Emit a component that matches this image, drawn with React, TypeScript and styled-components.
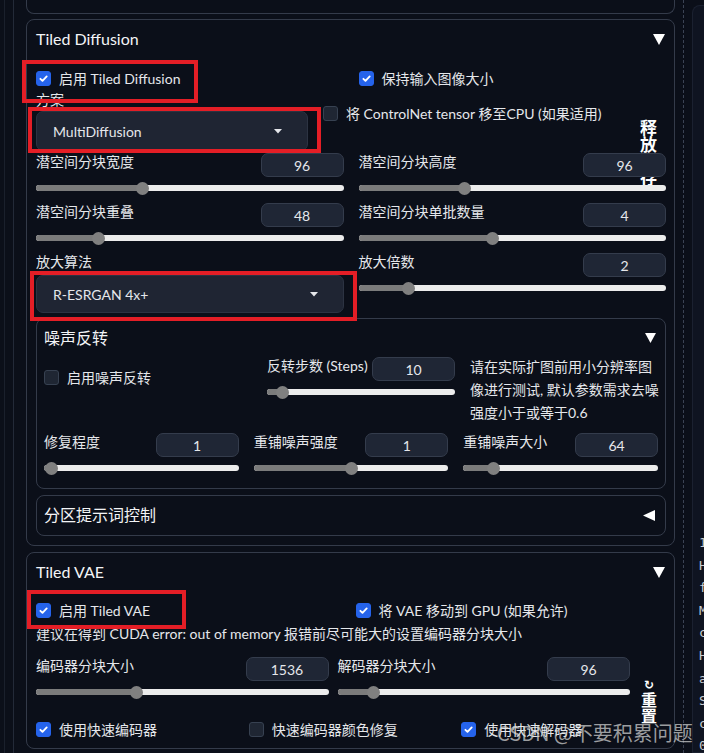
import React from 'react'
import styled, { createGlobalStyle } from 'styled-components'

const FONT = `Lato, "Noto Sans CJK SC", "Noto Sans", sans-serif`

const GlobalStyle = createGlobalStyle`
  * { box-sizing: border-box; }
  html, body { margin: 0; padding: 0; background: #0b0f19; }
  body { font-family: ${FONT}; color: #e5e7eb; font-size: 14px; }
`

const Page = styled.div`
  position: relative;
  width: 704px;
  height: 753px;
  overflow: hidden;
  display: flex;
  background: #0b0f19;
`

const Gutter = styled.div`
  display: flex;
  flex: none;
  margin-left: 4px;
  padding-left: 8px;
  border-left: 1px solid #1a202c;
`

const Column = styled.div`
  width: 671px;
  padding: 0 8px 0 12px;
  border-left: 1px solid #232a38;
  border-right: 1px dashed #3b4354;
  display: flex;
  flex-direction: column;
  & > * {
    flex: none;
  }
`

const SidePanel = styled.div`
  flex: 1;
  margin: 5px 0 0 8px;
  padding: 526px 0 0 6px;
  background: #0f1421;
  border: 1px solid #1b2130;
  border-right: none;
  border-radius: 8px 0 0 0;
  font-family: 'DejaVu Sans Mono', monospace;
  font-size: 13px;
  line-height: 22.6px;
  color: #c9cdd4;
  white-space: nowrap;
  overflow: hidden;
`

const PrevPanel = styled.div`
  height: 14px;
  margin-bottom: 5px;
  border: 1px solid #343b4a;
  border-top: none;
  border-radius: 0 0 8px 8px;
`

const Panel = styled.section<{ $mt?: number }>`
  position: relative;
  display: flex;
  flex-direction: column;
  margin-top: ${(p) => p.$mt ?? 0}px;
  padding: 8px 8px 9px 9px;
  border: 1px solid #343b4a;
  border-radius: 8px;
`

const SubPanel = styled.section<{ $mt: number; $pb: number }>`
  display: flex;
  flex-direction: column;
  margin-top: ${(p) => p.$mt}px;
  padding: 8px 7px ${(p) => p.$pb}px 7px;
  border: 1px solid #343b4a;
  border-radius: 8px;
`

const Header = styled.div<{ $mb?: number; $inset?: number }>`
  display: flex;
  align-items: center;
  justify-content: space-between;
  height: 22px;
  margin-bottom: ${(p) => p.$mb ?? 0}px;
  padding-right: ${(p) => p.$inset ?? 1}px;
  font-size: 16px;
  line-height: 22px;
  color: #f3f4f6;
`

const TwoCol = styled.div<{ $mt?: number }>`
  display: grid;
  grid-template-columns: 1fr 1fr;
  column-gap: 15px;
  margin-top: ${(p) => p.$mt ?? 0}px;
`

const SchemeRow = styled.div`
  display: grid;
  grid-template-columns: 272px 1fr;
  column-gap: 15px;
  margin-top: 3px;
`

const SideCell = styled.div`
  position: relative;
  padding-top: 12px;
`

const FreeButton = styled.div`
  position: absolute;
  top: 29px;
  right: 9px;
  z-index: 0;
  width: 17px;
  font-size: 17px;
  line-height: 16.5px;
  font-weight: 700;
  color: #ffffff;
`

const CheckItem = styled.label`
  display: inline-flex;
  align-items: center;
  gap: 8px;
  height: 20px;
  font-size: 14px;
  color: #e5e7eb;
  white-space: nowrap;
`

const Box = styled.span<{ $on?: boolean }>`
  display: inline-flex;
  align-items: center;
  justify-content: center;
  flex: none;
  width: 15px;
  height: 15px;
  border-radius: 3px;
  background: ${(p) => (p.$on ? '#2563eb' : '#1f2633')};
  border: 1px solid ${(p) => (p.$on ? '#2563eb' : '#374151')};
`

const Marked = styled.div<{ $x: number; $y: number; $w: number; $h: number }>`
  position: relative;
  &::after {
    content: '';
    position: absolute;
    left: ${(p) => p.$x}px;
    top: ${(p) => p.$y}px;
    width: ${(p) => p.$w}px;
    height: ${(p) => p.$h}px;
    border: 4px solid #e41e26;
    pointer-events: none;
    z-index: 5;
  }
`

const FieldLabel = styled.div<{ $mb?: number }>`
  font-size: 14px;
  line-height: 18px;
  margin-bottom: ${(p) => p.$mb ?? 0}px;
  white-space: nowrap;
  color: #e5e7eb;
`

const Select = styled.div<{ $h: number }>`
  display: flex;
  align-items: center;
  justify-content: space-between;
  height: ${(p) => p.$h}px;
  padding: 0 25px 0 16px;
  background: #1f2533;
  border: 1px solid #2c3342;
  border-radius: 7px;
  font-size: 14px;
  color: #e5e7eb;
`

const Field = styled.div`
  position: relative;
  z-index: 1;
`

const FieldHead = styled.div`
  display: flex;
  align-items: flex-start;
  justify-content: space-between;
`

const NumBox = styled.div`
  display: flex;
  align-items: center;
  justify-content: center;
  flex: none;
  width: 83px;
  height: 24px;
  background: #1f2635;
  border: 1px solid #343c4c;
  border-radius: 7px;
  font-size: 14px;
  color: #e5e7eb;
`

const Track = styled.div`
  position: relative;
  height: 6px;
  margin: 8px 0 12px;
  background: #ececec;
  border-radius: 3px;
`

const Fill = styled.div`
  position: absolute;
  left: 0;
  top: 0;
  bottom: 0;
  background: #7b7b7b;
  border-radius: 3px;
`

const Thumb = styled.div`
  position: absolute;
  top: 50%;
  width: 13px;
  height: 13px;
  margin: -6.5px 0 0 -6.5px;
  background: #808080;
  border-radius: 50%;
`

const NoiseTop = styled.div`
  display: grid;
  grid-template-columns: 208px 188px 1fr;
  column-gap: 15px;
  height: 76px;
`

const NoiseCheckCell = styled.div`
  padding-top: 10px;
`

const Hint = styled.div`
  margin-top: -2px;
  font-size: 14px;
  line-height: 23px;
  color: #e5e7eb;
  white-space: nowrap;
`

const ThreeCol = styled.div<{ $gap: number; $mt?: number }>`
  display: grid;
  grid-template-columns: repeat(3, 1fr);
  column-gap: ${(p) => p.$gap}px;
  margin-top: ${(p) => p.$mt ?? 0}px;
`

const VaeCheckRow = styled.div`
  display: grid;
  grid-template-columns: 1fr 1fr;
  column-gap: 9px;
`

const Note = styled.div`
  margin-top: 4px;
  font-size: 14px;
  line-height: 20px;
  white-space: nowrap;
  color: #e5e7eb;
`

const VaeGrid = styled.div`
  display: grid;
  grid-template-columns: 1fr 1fr 27px;
  column-gap: 9px;
  margin-top: 13px;
`

const ResetButton = styled.div`
  display: flex;
  flex-direction: column;
  align-items: flex-start;
  height: 50px;
  padding: 21px 0 0 2px;
  font-size: 16px;
  line-height: 16px;
  font-weight: 700;
  color: #ffffff;
`

const ResetIcon = styled.span`
  width: 16px;
  text-align: center;
  font-family: 'DejaVu Sans', sans-serif;
  font-size: 12px;
  line-height: 14px;
`

const Watermark = styled.div`
  position: absolute;
  left: 497px;
  top: 720px;
  z-index: 10;
  font-family: 'Noto Sans CJK SC', sans-serif;
  font-size: 20px;
  line-height: 26px;
  color: rgba(214, 214, 214, 0.72);
  white-space: nowrap;
  pointer-events: none;
`

const Caret: React.FC<{ dir: 'down' | 'left'; size?: number }> = ({ dir, size = 12 }) =>
  dir === 'down' ? (
    <svg width={size} height={size - 1} viewBox="0 0 12 11">
      <polygon points="0,0 12,0 6,11" fill="#fff" />
    </svg>
  ) : (
    <svg width={size} height={size - 1} viewBox="0 0 12 11">
      <polygon points="12,0 12,11 0,5.5" fill="#fff" />
    </svg>
  )

const DropArrow = () => (
  <svg width="8" height="5" viewBox="0 0 8 5">
    <polygon points="0,0 8,0 4,4.5" fill="#e5e7eb" />
  </svg>
)

const Check: React.FC<{ on?: boolean; children: React.ReactNode }> = ({ on, children }) => (
  <CheckItem>
    <Box $on={on}>
      {on && (
        <svg width="11" height="11" viewBox="0 0 12 12">
          <path d="M2.6 6.3l2.3 2.3 4.6-4.8" stroke="#fff" strokeWidth="2" fill="none" strokeLinecap="round" strokeLinejoin="round" />
        </svg>
      )}
    </Box>
    {children}
  </CheckItem>
)

const Slider: React.FC<{ label: string; value: string; pct: number }> = ({ label, value, pct }) => (
  <Field>
    <FieldHead>
      <FieldLabel>{label}</FieldLabel>
      <NumBox>{value}</NumBox>
    </FieldHead>
    <Track>
      <Fill style={{ width: `${pct}%` }} />
      <Thumb style={{ left: `${pct}%` }} />
    </Track>
  </Field>
)

const logLines = ['1girl, solo', 'Hires upscale', 'face restore', 'Model hash', 'cfg scale', 'Hires steps', 'a photo', 'Sampler', 'clip skip', '0.6']

export default function App() {
  return (
    <Page>
      <GlobalStyle />
      <Gutter>
        <Column>
          <PrevPanel />

          <Panel>
            <Header $mb={18}>
              <span>Tiled Diffusion</span>
              <Caret dir="down" />
            </Header>
            <TwoCol>
              <Marked $x={-14} $y={-8} $w={168} $h={35}>
                <Check on>启用 Tiled Diffusion</Check>
              </Marked>
              <Check on>保持输入图像大小</Check>
            </TwoCol>

            <SchemeRow>
              <div>
                <FieldLabel $mb={2}>方案</FieldLabel>
                <Marked $x={-8} $y={-4} $w={285} $h={38}>
                  <Select $h={40}>
                    MultiDiffusion
                    <DropArrow />
                  </Select>
                </Marked>
              </div>
              <SideCell>
                <Check>将 ControlNet tensor 移至CPU (如果适用)</Check>
                <FreeButton>释放显存</FreeButton>
              </SideCell>
            </SchemeRow>

            <TwoCol $mt={2}>
              <Slider label="潜空间分块宽度" value="96" pct={34.5} />
              <Slider label="潜空间分块高度" value="96" pct={34.4} />
            </TwoCol>
            <TwoCol>
              <Slider label="潜空间分块重叠" value="48" pct={20.2} />
              <Slider label="潜空间分块单批数量" value="4" pct={43.5} />
            </TwoCol>
            <TwoCol>
              <div>
                <FieldLabel $mb={4}>放大算法</FieldLabel>
                <Marked $x={-6} $y={-4} $w={319} $h={42}>
                  <Select $h={38}>
                    R-ESRGAN 4x+
                    <DropArrow />
                  </Select>
                </Marked>
              </div>
              <Slider label="放大倍数" value="2" pct={16.2} />
            </TwoCol>

            <SubPanel $mt={5} $pb={5}>
              <Header $mb={8} $inset={2}>
                <span>噪声反转</span>
                <Caret dir="down" size={11} />
              </Header>
              <NoiseTop>
                <NoiseCheckCell>
                  <Check>启用噪声反转</Check>
                </NoiseCheckCell>
                <Slider label="反转步数 (Steps)" value="10" pct={8.5} />
                <Hint>
                  请在实际扩图前用小分辨率图
                  <br />
                  像进行测试, 默认参数需求去噪
                  <br />
                  强度小于或等于0.6
                </Hint>
              </NoiseTop>
              <ThreeCol $gap={15}>
                <Slider label="修复程度" value="1" pct={3.6} />
                <Slider label="重铺噪声强度" value="1" pct={50.5} />
                <Slider label="重铺噪声大小" value="64" pct={15.5} />
              </ThreeCol>
            </SubPanel>

            <SubPanel $mt={6} $pb={9}>
              <Header $inset={3}>
                <span>分区提示词控制</span>
                <Caret dir="left" />
              </Header>
            </SubPanel>
          </Panel>

          <Panel $mt={6}>
            <Header $mb={17}>
              <span>Tiled VAE</span>
              <Caret dir="down" />
            </Header>
            <VaeCheckRow>
              <Marked $x={-9} $y={-10} $w={151} $h={31}>
                <Check on>启用 Tiled VAE</Check>
              </Marked>
              <Check on>将 VAE 移动到 GPU (如果允许)</Check>
            </VaeCheckRow>
            <Note>建议在得到 CUDA error: out of memory 报错前尽可能大的设置编码器分块大小</Note>
            <VaeGrid>
              <Slider label="编码器分块大小" value="1536" pct={34.2} />
              <Slider label="解码器分块大小" value="96" pct={12.3} />
              <ResetButton>
                <ResetIcon>↻</ResetIcon>
                <span>重</span>
                <span>置</span>
              </ResetButton>
            </VaeGrid>
            <ThreeCol $gap={8} $mt={12}>
              <Check on>使用快速编码器</Check>
              <Check>快速编码器颜色修复</Check>
              <Check on>使用快速解码器</Check>
            </ThreeCol>
          </Panel>
        </Column>
      </Gutter>

      <SidePanel>
        {logLines.map((l) => (
          <div key={l}>{l}</div>
        ))}
      </SidePanel>

      <Watermark>CSDN @不要积累问题</Watermark>
    </Page>
  )
}
